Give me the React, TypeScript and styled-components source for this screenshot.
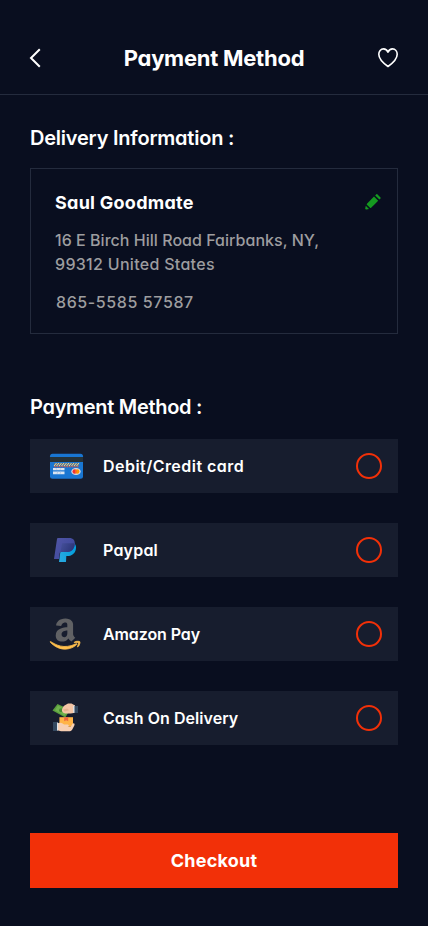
import React, { useState } from "react";
import styled, { createGlobalStyle } from "styled-components";

const GlobalStyle = createGlobalStyle`
  * { box-sizing: border-box; }
  body {
    margin: 0;
    background: #090e1f;
    color: #fff;
    font-family: Inter, "Liberation Sans", sans-serif;
    font-feature-settings: "cv11";
  }
`;

const Screen = styled.main`
  width: 428px;
  height: 926px;
  display: flex;
  flex-direction: column;
  background: #090e1f;
`;

const Header = styled.header`
  height: 95px;
  padding: 22px 28px 0;
  display: grid;
  grid-template-columns: 24px 1fr 24px;
  align-items: center;
  border-bottom: 1px solid #242b3d;
`;

const IconButton = styled.button`
  display: flex;
  padding: 0;
  border: 0;
  background: none;
`;

const Title = styled.h1`
  margin: 0;
  font-size: 22px;
  line-height: 28px;
  font-weight: 700;
  letter-spacing: -0.25px;
  text-align: center;
  white-space: nowrap;
`;

const Content = styled.div`
  flex: 1;
  display: flex;
  flex-direction: column;
  padding: 29px 30px 38px;
`;

const SectionTitle = styled.h2<{ $spacing: number }>`
  margin: 0;
  font-size: 20px;
  line-height: 28px;
  font-weight: 600;
  letter-spacing: ${(p) => p.$spacing}px;
  white-space: nowrap;
`;

const AddressCard = styled.section`
  height: 166px;
  margin: 16px 0 59px;
  padding: 20px 15px 0 24px;
  border: 1px solid #242b3d;
`;

const NameRow = styled.div`
  display: flex;
  align-items: center;
  justify-content: space-between;
  height: 26px;
`;

const Name = styled.h3`
  margin: 0;
  font-size: 18px;
  font-weight: 700;
  letter-spacing: 0.26px;
`;

const Line = styled.span<{ $spacing: number }>`
  display: block;
  letter-spacing: ${(p) => p.$spacing}px;
  white-space: nowrap;
`;

const Address = styled.address`
  margin-top: 13px;
  font-size: 16px;
  line-height: 24px;
  font-weight: 500;
  font-style: normal;
  color: #9d9d9f;
`;

const Phone = styled.div`
  margin: 14px 0 0 1px;
  font-size: 16px;
  line-height: 24px;
  font-weight: 500;
  color: #9d9d9f;
`;

const Methods = styled.div`
  display: flex;
  flex-direction: column;
  gap: 30px;
  margin-top: 18px;
`;

const Method = styled.button`
  display: flex;
  align-items: center;
  height: 54px;
  padding: 0 16px 0 17px;
  border: 0;
  color: #fff;
  background: #171d2e;
  font: inherit;
  font-feature-settings: inherit;
  text-align: left;
`;

const MethodIcon = styled.span`
  display: flex;
  width: 40px;
  height: 40px;
  margin-right: 16px;
`;

const MethodLabel = styled.span<{ $spacing: number }>`
  flex: 1;
  font-size: 16px;
  font-weight: 600;
  letter-spacing: ${(p) => p.$spacing}px;
`;

const Radio = styled.span<{ $on: boolean }>`
  width: 26px;
  height: 26px;
  border: 2px solid #f23008;
  border-radius: 50%;
  background: ${(p) => (p.$on ? "#f23008" : "transparent")};
  background-clip: content-box;
  padding: 4px;
`;

const Checkout = styled.button`
  height: 55px;
  margin-top: auto;
  border: 0;
  color: #fff;
  background: #f23008;
  font: inherit;
  font-size: 18px;
  font-weight: 700;
  letter-spacing: 0.25px;
`;

const BackIcon = () => (
  <svg width="14" height="20" viewBox="0 0 14 20" fill="none">
    <path d="M11.8 1.2 3 10l8.8 8.8" stroke="#fff" strokeWidth="2" />
  </svg>
);

const HeartIcon = () => (
  <svg width="24" height="22" viewBox="0 0 24 22" fill="none">
    <path
      d="M12 19.5C8 16.7 2.8 12.4 2.8 7.3c0-3.1 2-5.4 4.7-5.4 2 0 3.6 1.2 4.5 3.2.9-2 2.5-3.2 4.5-3.2 2.7 0 4.7 2.3 4.7 5.4 0 5.1-5.2 9.4-9.2 12.2Z"
      stroke="#fff"
      strokeWidth="1.6"
      strokeLinejoin="round"
    />
  </svg>
);

const PencilIcon = () => (
  <svg width="18" height="18" viewBox="0 0 18 18" fill="#159a20">
    <path d="M10 3.6 14.2 7.8 7.4 14.6q-.5.5-1.1.5L2.7 11.5q0-.6.5-1.1Z" />
    <path d="M11.2 2.4 12.3 1.3q.5-.4 1 0l3.2 3.2q.4.5 0 1L15.4 6.6Z" />
    <path d="M1.8 12.8 5 16l-2.6.5q-1.2 0-1.2-1.1Z" />
  </svg>
);

const CardIcon = () => (
  <svg width="40" height="40" viewBox="0 0 40 40">
    <rect x="3" y="7.8" width="33" height="25" rx="2.5" fill="#1976d2" />
    <path d="M3 11h33v5H3z" fill="#263238" />
    <path d="M7 17h25v4H7z" fill="#506f9b" />
    <path
      d="m7 20 2.5-3m0 3 2.5-3m0 3 2.5-3m0 3 2.5-3m0 3 2.5-3m0 3 2.5-3m0 3 2.5-3m0 3 2.5-3m0 3 2.5-3m0 3 2.5-3"
      stroke="#f4dc83"
      strokeWidth="1"
    />
    <path d="M7.2 20.8h24.8" stroke="#e65b52" strokeWidth="1" strokeDasharray="1.5 1" />
    <path d="M6 22h11.5v2.3H6zM6 25.4h11.5v2.9H6z" fill="#d8e4f1" />
    <path d="m9 22 1 2m4-2-1 2m-2 1-1 3m4-3-1 3" stroke="#9abbe0" strokeWidth=".6" />
    <ellipse cx="29" cy="25.5" rx="4.7" ry="3.6" fill="#d8dde5" />
    <circle cx="27.7" cy="25.5" r="2.2" fill="#ee3433" />
    <circle cx="30.3" cy="25.5" r="2.2" fill="#ff9800" />
    <path d="M29 23.7a2.2 2.2 0 0 1 0 3.6 2.2 2.2 0 0 1 0-3.6" fill="#ff6524" />
  </svg>
);

const PaypalIcon = () => (
  <svg width="40" height="40" viewBox="0 0 40 40">
    <defs>
      <linearGradient id="ppBack" x1="8" y1="10" x2="27" y2="24" gradientUnits="userSpaceOnUse">
        <stop stopColor="#5055a5" />
        <stop offset="1" stopColor="#3b469b" />
      </linearGradient>
      <linearGradient id="ppFold" x1="14" y1="15" x2="27" y2="22" gradientUnits="userSpaceOnUse">
        <stop stopColor="#434e98" />
        <stop offset="1" stopColor="#283274" />
      </linearGradient>
      <linearGradient id="ppFront" x1="12" y1="25" x2="29" y2="20" gradientUnits="userSpaceOnUse">
        <stop stopColor="#28a8e0" />
        <stop offset="1" stopColor="#009fdd" />
      </linearGradient>
    </defs>
    <path d="M14.5 13h12.3c1.9 1.2 2.6 3.3 2.1 5.9-.9 4.8-4.2 7.1-8.8 7.1h-.8L19 32h-7Z" fill="url(#ppFront)" />
    <path d="M11 8h11c4.4 0 6.3 2.7 5.7 6.9-.8 5-4 7.2-8.7 7.2h-4.7c-.9 0-1.5.5-1.7 1.4L12.2 29H7l3-20c.1-.6.4-1 1-1Z" fill="url(#ppBack)" />
    <path d="M15 13.2h12q.9.6.7 1.7c-.8 5-4 7.2-8.7 7.2h-4.7l-.9.3Z" fill="url(#ppFold)" />
  </svg>
);

const AmazonIcon = () => (
  <svg width="40" height="40" viewBox="0 0 40 40">
    <g transform="translate(2.7 2.2) scale(.0686)">
      <path
        fill="#606164"
        fillRule="evenodd"
        d="M257.2 162.7c-48.7 1.8-169.5 15.5-169.5 117.5 0 109.5 138.3 114 183.5 43.2 6.5 10.2 35.4 37.5 45.3 46.8l56.8-56S341 288.9 341 261.4V114.3C341 89 316.5 32 228.7 32 140.7 32 94 87 94 136.3l73.5 6.8c16.3-49.5 54.2-49.5 54.2-49.5 40.7-.1 35.5 29.8 35.5 69.1Zm0 86.8c0 80-84.2 68-84.2 17.2 0-47.2 50.5-56.7 84.2-57.8Z"
      />
      <path
        fill="#ffc04d"
        stroke="#ffc04d"
        strokeWidth="12"
        d="M393.2 413c-7.7 10-70 67-174.5 67S34.2 408.5 9.7 379c-6.8-7.7 1-11.3 5.5-8.3C88.5 415.2 203 488.5 387.7 401c7.5-3.7 13.3 2 5.5 12Zm39.8 2.2c-6.5 15.8-16 26.8-21.2 31-5.5 4.5-9.5 2.7-6.5-3.8s19.3-46.5 12.7-55c-6.5-8.3-37-4.3-48-3.2-10.8 1-13 2-14-.3-2.3-5.7 21.7-15.5 37.5-17.5 15.7-1.8 41-.8 46 5.7 3.7 5.1 0 27.1-6.5 43.1Z"
      />
    </g>
  </svg>
);

const CashIcon = () => (
  <svg width="40" height="40" viewBox="0 0 40 40">
    <path d="M10.5 6 23 11.8l-4.7 7.7L5.5 12.5Z" fill="#5b9f3d" />
    <path d="m11 7.6 9.4 5.1-3 5L8 12.2Z" fill="#70b24e" />
    <circle cx="14" cy="12.2" r="2" fill="#478b32" />
    <path d="M17.5 7.5 21 5.5h3.5L28 7.6v7.2l-4.2.8h-4.1c-3 0-5-2-4.7-3.7.3-1.6 1.2-3.6 2.5-4.4Z" fill="#f4c5a5" />
    <path d="m16 11.4 4.2-.8 2 1.6-4.5 1.2Z" fill="#e6b18f" />
    <path d="M26.2 7.8h1.8v7h-1.8z" fill="#dce4ec" />
    <path d="M27.5 8H31v7h-3.5z" fill="#33485f" />
    <path d="M12.4 19.2H26v9.6H12.4z" fill="#ffb447" />
    <path d="M17.2 19.2h4v4l-2-1-2 1z" fill="#ee6840" />
    <path d="M10.5 25.3c3-1.4 4.8-.3 6.7 1.3h3.5c1.6.2 1.6 2.3 0 2.3l3.1-.2 1.7-2.9c1.6-1.4 2.8.2 1.6 2.2L25 32c-.8 1-1.7 1.2-2.8 1.2H14l-4.5-1.3Z" fill="#f7cfb2" />
    <path d="M9.5 24.5h1.6v8H9.5z" fill="#dce4ec" />
    <path d="M6 24h4v9H6z" fill="#33485f" />
  </svg>
);

const options = [
  { label: "Debit/Credit card", Icon: CardIcon, spacing: 0.46 },
  { label: "Paypal", Icon: PaypalIcon, spacing: 0.2 },
  { label: "Amazon Pay", Icon: AmazonIcon, spacing: -0.1 },
  { label: "Cash On Delivery", Icon: CashIcon, spacing: 0.05 },
];

export default function App() {
  const [selected, setSelected] = useState<string | null>(null);
  return (
    <Screen>
      <GlobalStyle />
      <Header>
        <IconButton aria-label="Back"><BackIcon /></IconButton>
        <Title>Payment Method</Title>
        <IconButton aria-label="Favourite"><HeartIcon /></IconButton>
      </Header>
      <Content>
        <SectionTitle $spacing={-0.22}>Delivery Information :</SectionTitle>
        <AddressCard>
          <NameRow>
            <Name>Saul Goodmate</Name>
            <IconButton aria-label="Edit address"><PencilIcon /></IconButton>
          </NameRow>
          <Address>
            <Line $spacing={0.03}>16 E Birch Hill Road Fairbanks, NY,</Line>
            <Line $spacing={0.3}>99312 United States</Line>
          </Address>
          <Phone><Line $spacing={0.6}>865-5585 57587</Line></Phone>
        </AddressCard>
        <SectionTitle $spacing={-0.3}>Payment Method :</SectionTitle>
        <Methods>
          {options.map(({ label, Icon, spacing }) => (
            <Method key={label} onClick={() => setSelected(label)}>
              <MethodIcon><Icon /></MethodIcon>
              <MethodLabel $spacing={spacing}>{label}</MethodLabel>
              <Radio $on={selected === label} />
            </Method>
          ))}
        </Methods>
        <Checkout>Checkout</Checkout>
      </Content>
    </Screen>
  );
}
